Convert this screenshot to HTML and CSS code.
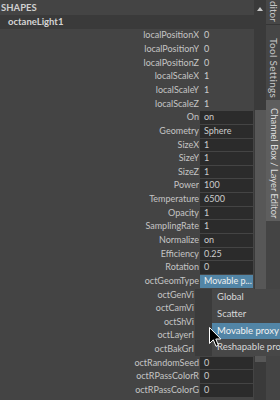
FILE: index.html
```html
<!DOCTYPE html>
<html>
<head>
<meta charset="utf-8">
<link rel="stylesheet" href="styles.css">
</head>
<body>
<div class="app">
  <div class="panel">
    <div class="title">SHAPES</div>
    <div class="node">octaneLight1</div>
    <div class="rows">
      <div class="row"><span class="lbl">localPositionX</span><span class="val plain">0</span></div>
      <div class="row"><span class="lbl">localPositionY</span><span class="val plain">0</span></div>
      <div class="row"><span class="lbl">localPositionZ</span><span class="val plain">0</span></div>
      <div class="row"><span class="lbl">localScaleX</span><span class="val plain">1</span></div>
      <div class="row"><span class="lbl">localScaleY</span><span class="val plain">1</span></div>
      <div class="row"><span class="lbl">localScaleZ</span><span class="val plain">1</span></div>
      <div class="row"><span class="lbl">On</span><span class="val">on</span></div>
      <div class="row"><span class="lbl">Geometry</span><span class="val">Sphere</span></div>
      <div class="row"><span class="lbl">SizeX</span><span class="val">1</span></div>
      <div class="row"><span class="lbl">SizeY</span><span class="val">1</span></div>
      <div class="row"><span class="lbl">SizeZ</span><span class="val">1</span></div>
      <div class="row"><span class="lbl">Power</span><span class="val">100</span></div>
      <div class="row"><span class="lbl">Temperature</span><span class="val">6500</span></div>
      <div class="row"><span class="lbl">Opacity</span><span class="val">1</span></div>
      <div class="row"><span class="lbl">SamplingRate</span><span class="val">1</span></div>
      <div class="row"><span class="lbl">Normalize</span><span class="val">on</span></div>
      <div class="row"><span class="lbl">Efficiency</span><span class="val">0.25</span></div>
      <div class="row"><span class="lbl">Rotation</span><span class="val">0</span></div>
      <div class="row"><span class="lbl">octGeomType</span><span class="val sel">Movable p...</span></div>
      <div class="row"><span class="lbl cut">octGenVi</span><span class="val"></span></div>
      <div class="row"><span class="lbl cut">octCamVi</span><span class="val"></span></div>
      <div class="row"><span class="lbl cut">octShVi</span><span class="val"></span></div>
      <div class="row"><span class="lbl cut">octLayerI</span><span class="val"></span></div>
      <div class="row"><span class="lbl cut">octBakGrI</span><span class="val"></span></div>
      <div class="row"><span class="lbl">octRandomSeed</span><span class="val">0</span></div>
      <div class="row"><span class="lbl">octRPassColorR</span><span class="val">0</span></div>
      <div class="row"><span class="lbl">octRPassColorG</span><span class="val">0</span></div>
    </div>
  </div>
  <div class="scroll">
    <div class="arrow"></div>
    <div class="thumb"></div>
  </div>
  <div class="tabs">
    <div class="tab t1"><span>ditor</span></div>
    <div class="tab t2"><span>Tool Settings</span></div>
    <div class="tab active"><span>Channel Box / Layer Editor</span></div>
    <div class="tab rest"></div>
  </div>
  <div class="menu">
    <div class="gutter"></div>
    <div class="items">
      <div class="item">Global</div>
      <div class="item">Scatter</div>
      <div class="item hi">Movable proxy</div>
      <div class="item">Reshapable proxy</div>
    </div>
  </div>
  <svg class="cursor" width="13" height="21" viewBox="0 0 13 21">
    <path d="M0.5 0.5 L0.5 16.5 L4.3 12.8 L7 19.3 L9.4 18.3 L6.8 12 L11.8 12 Z" fill="#000" stroke="#fff" stroke-width="1"/>
  </svg>
</div>
</body>
</html>
```

FILE: styles.css
```css
html, body {
  margin: 0;
  padding: 0;
  background: #444444;
}

.app {
  position: relative;
  display: flex;
  width: 280px;
  height: 400px;
  overflow: hidden;
  background: #444444;
  font-family: Lato, "Liberation Sans", sans-serif;
  font-size: 9px;
  color: #c4c4c4;
}

.panel {
  width: 254px;
  flex: none;
}

.title {
  height: 15px;
  line-height: 15px;
  padding-left: 1px;
  font-weight: 700;
  font-size: 9.5px;
  color: #d0d0d0;
}

.node {
  height: 14px;
  line-height: 14px;
  padding-left: 8px;
  background: #3a3a3a;
  font-weight: 700;
  font-size: 9.5px;
  color: #d4d4d4;
}

.rows {
  padding-top: 0.4px;
}

.row {
  display: flex;
  height: 13.65px;
}

.lbl {
  width: 199px;
  flex: none;
  text-align: right;
  line-height: 12.6px;
  white-space: nowrap;
  overflow: hidden;
  box-sizing: border-box;
}

.lbl.cut {
  padding-right: 5px;
}

.val {
  width: 53px;
  flex: none;
  margin-left: 1px;
  margin-bottom: 1px;
  padding-left: 4px;
  box-sizing: border-box;
  line-height: 12.6px;
  background: #2b2b2b;
  color: #cccccc;
  white-space: nowrap;
  overflow: hidden;
}

.val.plain {
  background: none;
}

.val.sel {
  background: #5285a6;
  color: #f0f0f0;
}

.scroll {
  width: 12px;
  flex: none;
  background: #3a3a3a;
  padding-top: 7px;
  box-sizing: border-box;
}

.arrow {
  width: 0;
  height: 0;
  margin-left: 2.5px;
  border-left: 3.5px solid transparent;
  border-right: 3.5px solid transparent;
  border-bottom: 4px solid #c8c8c8;
}

.thumb {
  margin-top: 99px;
  margin-left: 1px;
  width: 11px;
  height: 252px;
  background: #575757;
}

.tabs {
  width: 14px;
  flex: none;
  display: flex;
  flex-direction: column;
}

.tab {
  display: flex;
  justify-content: center;
  writing-mode: vertical-rl;
  font-size: 10px;
  color: #c6c6c6;
  overflow: hidden;
  box-sizing: border-box;
  white-space: nowrap;
  flex: none;
}

.t1 {
  height: 25px;
  background: #474747;
  border-bottom: 1px solid #363636;
}

.t1 span {
  margin-top: -2px;
}

.t2 {
  height: 75px;
  background: #464646;
  padding-top: 11px;
  letter-spacing: 0.3px;
}

.active {
  height: 121px;
  background: #5e5e5e;
  color: #dedede;
  padding-top: 5px;
  font-size: 9.4px;
}

.rest {
  flex: 1;
  background: #444444;
}

.menu {
  position: absolute;
  left: 195px;
  top: 289px;
  width: 85px;
  height: 67px;
  display: flex;
}

.gutter {
  width: 17px;
  flex: none;
  background: #3b3b3b;
}

.items {
  flex: 1;
  min-width: 0;
  overflow: hidden;
  background: #474747;
}

.item {
  height: 16.75px;
  line-height: 16.75px;
  padding-left: 5px;
  font-size: 9.5px;
  color: #d8d8d8;
  white-space: nowrap;
}

.item.hi {
  background: #5285a6;
  color: #f2f2f2;
}

.cursor {
  position: absolute;
  left: 209px;
  top: 327px;
}
```
